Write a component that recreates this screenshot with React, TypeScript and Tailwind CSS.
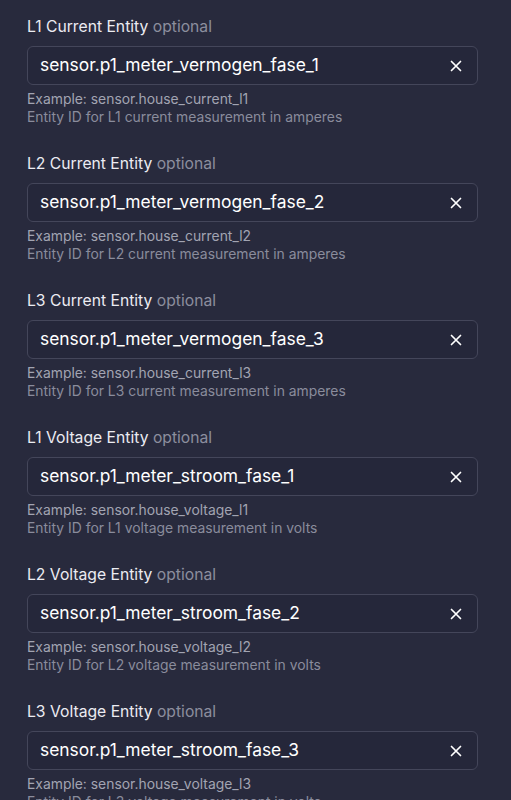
import React from "react";

type Field = {
  label: string;
  value: string;
  example: string;
  help: string;
};

const fields: Field[] = [
  {
    label: "L1 Current Entity",
    value: "sensor.p1_meter_vermogen_fase_1",
    example: "Example: sensor.house_current_l1",
    help: "Entity ID for L1 current measurement in amperes",
  },
  {
    label: "L2 Current Entity",
    value: "sensor.p1_meter_vermogen_fase_2",
    example: "Example: sensor.house_current_l2",
    help: "Entity ID for L2 current measurement in amperes",
  },
  {
    label: "L3 Current Entity",
    value: "sensor.p1_meter_vermogen_fase_3",
    example: "Example: sensor.house_current_l3",
    help: "Entity ID for L3 current measurement in amperes",
  },
  {
    label: "L1 Voltage Entity",
    value: "sensor.p1_meter_stroom_fase_1",
    example: "Example: sensor.house_voltage_l1",
    help: "Entity ID for L1 voltage measurement in volts",
  },
  {
    label: "L2 Voltage Entity",
    value: "sensor.p1_meter_stroom_fase_2",
    example: "Example: sensor.house_voltage_l2",
    help: "Entity ID for L2 voltage measurement in volts",
  },
  {
    label: "L3 Voltage Entity",
    value: "sensor.p1_meter_stroom_fase_3",
    example: "Example: sensor.house_voltage_l3",
    help: "Entity ID for L3 voltage measurement in volts",
  },
];

const ClearIcon = () => (
  <svg width="12" height="12" viewBox="0 0 12 12" fill="none">
    <path d="M1.5 1.5L10.5 10.5M10.5 1.5L1.5 10.5" stroke="currentColor" strokeWidth="1.7" strokeLinecap="round" />
  </svg>
);

const EntityField: React.FC<{ field: Field }> = ({ field }) => (
  <div className="flex flex-col">
    <label className="text-[15.7px] leading-[20px] font-normal text-[#ececf2]">
      {field.label} <span className="text-[#8c8e9e]">optional</span>
    </label>
    <div className="mt-[9px] flex h-[39px] items-center rounded-[6px] border border-[#44465a] bg-[#25273a] pl-[12px] pr-[15px]">
      <span className="flex-1 text-[17.4px] font-normal text-white">{field.value}</span>
      <button className="text-white">
        <ClearIcon />
      </button>
    </div>
    <p className="mt-[5px] text-[13.9px] leading-[18px] text-[#a2a4b2]">{field.example}</p>
    <p className="text-[13.9px] leading-[18px] text-[#8a8c9c]">{field.help}</p>
  </div>
);

export default function App() {
  return (
    <div
      className="min-h-screen bg-[#282a3d] pl-[27px] pr-[33px] pt-[17px]"
      style={{ fontFamily: "Inter, 'Noto Sans', sans-serif" }}
    >
      <div className="flex flex-col gap-[28px]">
        {fields.map((f) => (
          <EntityField key={f.label} field={f} />
        ))}
      </div>
    </div>
  );
}
